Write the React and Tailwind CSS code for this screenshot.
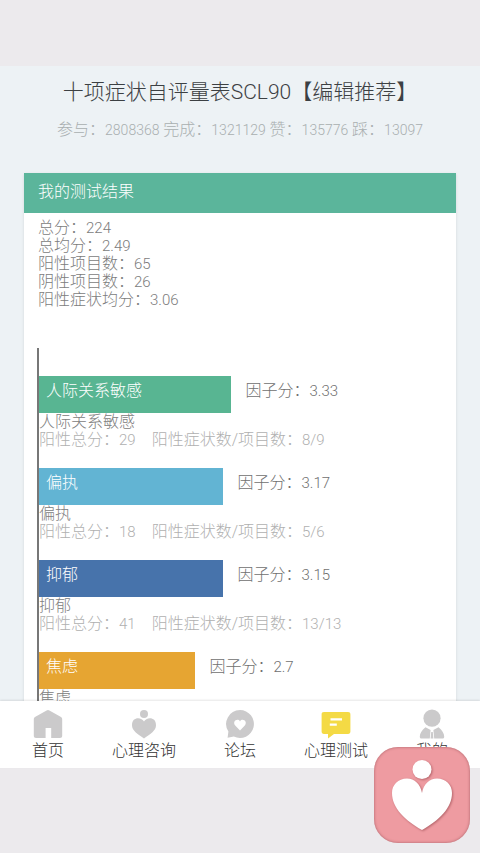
import React from 'react';

const summary = [
  { label: '总分', value: '224' },
  { label: '总均分', value: '2.49' },
  { label: '阳性项目数', value: '65' },
  { label: '阴性项目数', value: '26' },
  { label: '阳性症状均分', value: '3.06' },
];

const factors = [
  { name: '人际关系敏感', score: '3.33', width: 48, color: 'bg-[#58b592]', total: '29', items: '8/9' },
  { name: '偏执', score: '3.17', width: 46, color: 'bg-[#62b4d3]', total: '18', items: '5/6' },
  { name: '抑郁', score: '3.15', width: 46, color: 'bg-[#4773ab]', total: '41', items: '13/13' },
  { name: '焦虑', score: '2.7', width: 39, color: 'bg-[#e6a532]', total: '', items: '' },
];

const HomeIcon = () => (
  <svg viewBox="0 0 32 32" className="h-8 w-8" fill="currentColor">
    <path d="M14.6 2.4a2.6 2.6 0 0 1 2.8 0L28.600 8.800c1 .6 1.600 1.400 1.600 2.600v16.400c0 1.400-.9 2.200-2.200 2.200h-8.800V20h-5.600v10H4c-1.300 0-2.200-.8-2.200-2.200V11.400c0-1.200.6-2 1.600-2.600z" />
  </svg>
);

const HeartIcon = () => (
  <svg viewBox="0 0 32 32" className="h-8 w-8" fill="currentColor">
    <circle cx="16" cy="6" r="4" />
    <path d="M16 13.400C13.800 9 4 8 4 17.200 4 22.500 9.500 26 16 30.400c6.500-4.400 12-7.900 12-13.200 0-9.200-9.800-8.200-12-3.800z" />
  </svg>
);

const ForumIcon = () => (
  <svg viewBox="0 0 32 32" className="h-8 w-8">
    <path fill="currentColor" d="M16 2a14 14 0 1 1-6.200 26.600L3.600 29.800l.8-6.200A14 14 0 0 1 16 2z" />
    <path fill="white" d="M16 22.400l-4.800-4.800c-3.400-4.200 2.400-8 4.800-4.200 2.400-3.800 8.200 0 4.800 4.200z" />
  </svg>
);

const TestIcon = () => (
  <svg viewBox="0 0 32 32" className="h-8 w-8">
    <path fill="currentColor" d="M4 4h24c1.600 0 2.400.8 2.400 2.400v17.200c0 1.600-.8 2.400-2.400 2.400H14l-6 4.600V26H4c-1.600 0-2.400-.8-2.400-2.400V6.400C1.600 4.800 2.400 4 4 4z" />
    <path stroke="white" strokeWidth="2.400" d="M10.500 11.400h11.500M9.800 16.600h7" />
  </svg>
);

const UserIcon = () => (
  <svg viewBox="0 0 32 32" className="h-8 w-8" fill="currentColor">
    <circle cx="16" cy="10.200" r="8.600" />
    <path d="M9.500 19.300L14.600 22l-.8 8.500H5.500c-1.200 0-1.700-.6-1.700-2 0-2.700 1.900-6.200 5.700-9.200zM22.500 19.300L17.400 22l.8 8.500h8.300c1.200 0 1.700-.6 1.700-2 0-2.700-1.900-6.200-5.700-9.200zM15.200 24h1.600l.6 6.500h-2.800z" />
  </svg>
);

const tabs = [
  { label: '首页', icon: HomeIcon },
  { label: '心理咨询', icon: HeartIcon },
  { label: '论坛', icon: ForumIcon },
  { label: '心理测试', icon: TestIcon, active: true },
  { label: '我的', icon: UserIcon },
];

const Num = ({ children }) => <span className="text-[15px]">{children}</span>;

const App = () => {
  return (
    <div className="relative flex h-screen flex-col overflow-hidden bg-[#eceaed] font-['Roboto','Noto_Sans_CJK_SC',sans-serif] text-base font-light">
      <main className="mt-[66px] min-h-0 flex-1 overflow-hidden bg-[#edf2f5] px-6">
        {/* Title */}
        <header className="pt-3 text-center">
          <h1 className="text-[21px] leading-7 whitespace-nowrap text-[#3c4043]">十项症状自评量表SCL90【编辑推荐】</h1>
          <p className="mt-3 leading-6 whitespace-nowrap text-[#a9afb0]">
            参与：<span className="text-sm">2808368</span> 完成：<span className="text-sm">1321129</span> 赞：
            <span className="text-sm">135776</span> 踩：<span className="text-sm">13097</span>
          </p>
        </header>

        {/* Result card */}
        <section className="mt-[31px] bg-white shadow">
          <h2 className="h-10 bg-[#5bb59b] px-3.5 leading-[38px] text-white">我的测试结果</h2>
          <ul className="px-3.5 pt-1.5 leading-[18px] text-[#7c7c7c]">
            {summary.map((row) => (
              <li key={row.label}>
                {row.label}：<Num>{row.value}</Num>
              </li>
            ))}
          </ul>

          {/* Factor bars */}
          <div className="mt-[39px] mr-4 ml-[13px] border-l-2 border-[#777777] pt-7">
            {factors.map((f) => (
              <div key={f.name} className="mb-[19px] leading-[18px]">
                <div className="flex h-[37px]">
                  <div className={`${f.color} px-[7px] pt-1.5 text-white`} style={{ width: `${f.width}%` }}>
                    {f.name}
                  </div>
                  <div className="pt-1.5 pl-3.5 text-[#707070]">
                    因子分：<Num>{f.score}</Num>
                  </div>
                </div>
                <p className="text-[#808080]">{f.name}</p>
                <p className="flex h-[18px] gap-4 text-[#b0b0b0]">
                  {f.total && (
                    <>
                      <span>阳性总分：<Num>{f.total}</Num></span>
                      <span>阳性症状数/项目数：<Num>{f.items}</Num></span>
                    </>
                  )}
                </p>
              </div>
            ))}
          </div>
        </section>
      </main>

      {/* Bottom tabs */}
      <nav className="z-10 mb-[85px] grid h-[67px] grid-cols-5 bg-white shadow-[0_-1px_2px_#0000001a]">
        {tabs.map(({ label, icon: Icon, active }) => (
          <a key={label} href="#" className="flex flex-col items-center pt-[7px]">
            <span className={active ? 'text-[#f4da45]' : 'text-[#cbcacb]'}>
              <Icon />
            </span>
            <span className="leading-[22px] text-[#333333]">{label}</span>
          </a>
        ))}
      </nav>

      {/* Floating shortcut */}
      <button
        type="button"
        aria-label="心理咨询"
        className="absolute right-2.5 bottom-2.5 z-20 h-24 w-24 rounded-3xl bg-[#ee9ba1] shadow-[inset_0_0_3px_#a85f66]"
      >
        <svg viewBox="0 0 96 96" className="h-24 w-24 drop-shadow-[1px_1px_1px_#b5656b]" fill="white">
          <circle cx="48" cy="22.500" r="9.500" />
          <path d="M48 46C46.500 37 40.500 31.500 33 31.500 24 31.500 18 38 18 46c0 15 13 27.500 30 37 17-9.500 30-22 30-37 0-8-6-14.500-15-14.500C55.500 31.500 49.500 37 48 46z" />
        </svg>
      </button>
    </div>
  );
};

export default App;
